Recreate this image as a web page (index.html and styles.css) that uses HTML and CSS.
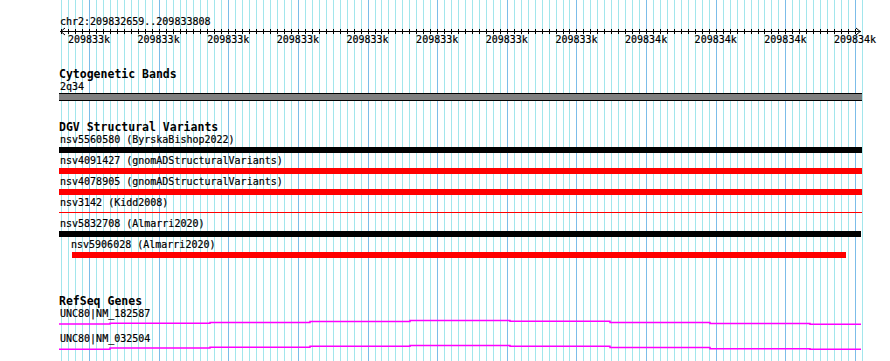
FILE: index.html
```html
<!DOCTYPE html>
<html lang="en">
<head>
<meta charset="utf-8">
<title>Genome browser</title>
<link rel="stylesheet" href="styles.css">
</head>
<body>
<div class="view">
  <svg class="grid" width="890" height="361" viewBox="0 0 890 361" aria-hidden="true">
    <path class="grid-minor" d="M61.5 0V361M68.5 0V361M75.5 0V361M82.5 0V361M96.5 0V361M103.5 0V361M110.5 0V361M117.5 0V361M124.5 0V361M131.5 0V361M138.5 0V361M145.5 0V361M152.5 0V361M166.5 0V361M173.5 0V361M180.5 0V361M186.5 0V361M193.5 0V361M200.5 0V361M207.5 0V361M214.5 0V361M221.5 0V361M235.5 0V361M242.5 0V361M249.5 0V361M256.5 0V361M263.5 0V361M270.5 0V361M277.5 0V361M284.5 0V361M291.5 0V361M305.5 0V361M312.5 0V361M319.5 0V361M326.5 0V361M333.5 0V361M340.5 0V361M347.5 0V361M354.5 0V361M361.5 0V361M375.5 0V361M381.5 0V361M388.5 0V361M395.5 0V361M402.5 0V361M409.5 0V361M416.5 0V361M423.5 0V361M430.5 0V361M444.5 0V361M451.5 0V361M458.5 0V361M465.5 0V361M472.5 0V361M479.5 0V361M486.5 0V361M493.5 0V361M500.5 0V361M514.5 0V361M521.5 0V361M528.5 0V361M535.5 0V361M542.5 0V361M549.5 0V361M556.5 0V361M563.5 0V361M569.5 0V361M583.5 0V361M590.5 0V361M597.5 0V361M604.5 0V361M611.5 0V361M618.5 0V361M625.5 0V361M632.5 0V361M639.5 0V361M653.5 0V361M660.5 0V361M667.5 0V361M674.5 0V361M681.5 0V361M688.5 0V361M695.5 0V361M702.5 0V361M709.5 0V361M723.5 0V361M730.5 0V361M737.5 0V361M744.5 0V361M751.5 0V361M758.5 0V361M764.5 0V361M771.5 0V361M778.5 0V361M792.5 0V361M799.5 0V361M806.5 0V361M813.5 0V361M820.5 0V361M827.5 0V361M834.5 0V361M841.5 0V361M848.5 0V361M862.5 0V361"/>
    <path class="grid-major" d="M89.5 0V361M159.5 0V361M228.5 0V361M298.5 0V361M368.5 0V361M437.5 0V361M507.5 0V361M576.5 0V361M646.5 0V361M716.5 0V361M785.5 0V361M855.5 0V361"/>
  </svg>

  <div class="content">
    <div class="locus">chr2:209832659..209833808</div>

    <svg class="ruler" width="890" height="20" viewBox="0 0 890 20">
      <path class="ruler-line" d="M60 4.5H861M65 1L60.8 4.5L65 8M856 1L860.2 4.5L856 8"/>
      <path class="ruler-ticks" d="M61.5 2v5M68.5 2v5M75.5 2v5M82.5 2v5M89.5 2v5M96.5 2v5M103.5 2v5M110.5 2v5M117.5 2v5M124.5 2v5M131.5 2v5M138.5 2v5M145.5 2v5M152.5 2v5M159.5 2v5M166.5 2v5M173.5 2v5M180.5 2v5M186.5 2v5M193.5 2v5M200.5 2v5M207.5 2v5M214.5 2v5M221.5 2v5M228.5 2v5M235.5 2v5M242.5 2v5M249.5 2v5M256.5 2v5M263.5 2v5M270.5 2v5M277.5 2v5M284.5 2v5M291.5 2v5M298.5 2v5M305.5 2v5M312.5 2v5M319.5 2v5M326.5 2v5M333.5 2v5M340.5 2v5M347.5 2v5M354.5 2v5M361.5 2v5M368.5 2v5M375.5 2v5M381.5 2v5M388.5 2v5M395.5 2v5M402.5 2v5M409.5 2v5M416.5 2v5M423.5 2v5M430.5 2v5M437.5 2v5M444.5 2v5M451.5 2v5M458.5 2v5M465.5 2v5M472.5 2v5M479.5 2v5M486.5 2v5M493.5 2v5M500.5 2v5M507.5 2v5M514.5 2v5M521.5 2v5M528.5 2v5M535.5 2v5M542.5 2v5M549.5 2v5M556.5 2v5M563.5 2v5M569.5 2v5M576.5 2v5M583.5 2v5M590.5 2v5M597.5 2v5M604.5 2v5M611.5 2v5M618.5 2v5M625.5 2v5M632.5 2v5M639.5 2v5M646.5 2v5M653.5 2v5M660.5 2v5M667.5 2v5M674.5 2v5M681.5 2v5M688.5 2v5M695.5 2v5M702.5 2v5M709.5 2v5M716.5 2v5M723.5 2v5M730.5 2v5M737.5 2v5M744.5 2v5M751.5 2v5M758.5 2v5M764.5 2v5M771.5 2v5M778.5 2v5M785.5 2v5M792.5 2v5M799.5 2v5M806.5 2v5M813.5 2v5M820.5 2v5M827.5 2v5M834.5 2v5M841.5 2v5M848.5 2v5M855.5 2v5"/>
      <g class="ruler-labels">
        <text x="89" y="16">209833k</text>
        <text x="158.6" y="16">209833k</text>
        <text x="228.3" y="16">209833k</text>
        <text x="297.9" y="16">209833k</text>
        <text x="367.5" y="16">209833k</text>
        <text x="437.2" y="16">209833k</text>
        <text x="506.8" y="16">209833k</text>
        <text x="576.5" y="16">209833k</text>
        <text x="646.1" y="16">209834k</text>
        <text x="715.7" y="16">209834k</text>
        <text x="785.4" y="16">209834k</text>
        <text x="855" y="16">209834k</text>
      </g>
    </svg>

    <section class="track track-bands">
      <h2 class="track-title">Cytogenetic Bands</h2>
      <div class="label">2q34</div>
      <div class="band"></div>
    </section>

    <section class="track track-dgv">
      <h2 class="track-title">DGV Structural Variants</h2>
      <div class="variant">
        <div class="label">nsv5560580 (ByrskaBishop2022)</div>
        <div class="bar bar-black"></div>
      </div>
      <div class="variant">
        <div class="label">nsv4091427 (gnomADStructuralVariants)</div>
        <div class="bar bar-red"></div>
      </div>
      <div class="variant">
        <div class="label">nsv4078905 (gnomADStructuralVariants)</div>
        <div class="bar bar-red"></div>
      </div>
      <div class="variant">
        <div class="label">nsv3142 (Kidd2008)</div>
        <div class="bar bar-thin"></div>
      </div>
      <div class="variant">
        <div class="label">nsv5832708 (Almarri2020)</div>
        <div class="bar bar-black bar-short"></div>
      </div>
      <div class="variant variant-nested">
        <div class="label">nsv5906028 (Almarri2020)</div>
        <div class="bar bar-red"></div>
      </div>
    </section>

    <section class="track track-genes">
      <h2 class="track-title">RefSeq Genes</h2>
      <div class="gene">
        <div class="label">UNC80|NM_182587</div>
        <svg class="gene-line" width="890" height="14" viewBox="0 0 890 14">
          <path d="M59 5H110V4.3H210V3.4H310V2.4H410V1.5H510V2.3H610V3.5H710V4.5H810V5.3H861"/>
        </svg>
      </div>
      <div class="gene">
        <div class="label">UNC80|NM_032504</div>
        <svg class="gene-line" width="890" height="14" viewBox="0 0 890 14">
          <path d="M59 5.2H110V4.1H210V3.3H310V2.3H410V1.5H510V2.3H610V3.6H710V4.8H810V5.3H861"/>
        </svg>
      </div>
    </section>
  </div>
</div>
</body>
</html>
```

FILE: styles.css
```css
html, body {
  margin: 0;
  padding: 0;
  background: #ffffff;
}

.view {
  position: relative;
  width: 890px;
  height: 361px;
  overflow: hidden;
  font-family: "DejaVu Sans Mono", "Liberation Mono", monospace;
  color: #000;
}

.grid {
  position: absolute;
  top: 0;
  left: 0;
  z-index: 0;
}

.grid-minor {
  stroke: #a2e6ec;
  stroke-width: 1;
  fill: none;
}

.grid-major {
  stroke: #7cbde9;
  stroke-width: 1;
  fill: none;
}

.content {
  position: relative;
  z-index: 1;
  padding-top: 16px;
}

.locus {
  margin-left: 60px;
  font-size: 10px;
  line-height: 11px;
  -webkit-text-stroke: 0.2px #000;
}

.ruler {
  display: block;
}

.ruler-line,
.ruler-ticks {
  stroke: #000;
  stroke-width: 1;
  fill: none;
}

.ruler-labels text {
  font-family: "DejaVu Sans Mono", "Liberation Mono", monospace;
  font-size: 10px;
  text-anchor: middle;
  fill: #000;
  stroke: #000;
  stroke-width: 0.2px;
}

.track-title {
  margin: 0 0 0 59px;
  font-size: 11.5px;
  line-height: 13px;
  font-weight: bold;
}

.label {
  margin-left: 60px;
  font-size: 10px;
  line-height: 11px;
  white-space: nowrap;
  -webkit-text-stroke: 0.2px #000;
}

.track-bands {
  margin-top: 21px;
}

.band {
  margin: 1px 0 0 59px;
  width: 803px;
  height: 6px;
  background: #808080;
  border-top: 1px solid #000;
  border-bottom: 1px solid #000;
}

.track-dgv {
  margin-top: 20px;
}

.variant {
  padding-bottom: 2px;
}

.bar {
  margin: 2px 0 0 59px;
  width: 803px;
  height: 6px;
}

.bar-black {
  background: #000;
}

.bar-red {
  background: #ff0000;
}

.bar-thin {
  background: linear-gradient(to bottom, transparent 2px, #ff0000 2px, #ff0000 3px, transparent 3px);
}

.bar-short {
  width: 802px;
}

.variant-nested .label {
  margin-left: 71px;
}

.variant-nested .bar {
  margin-left: 72px;
  width: 774px;
}

.track-genes {
  margin-top: 35px;
}

.gene-line {
  display: block;
}

.gene-line path {
  stroke: #ff00ff;
  stroke-width: 1.5;
  fill: none;
}
```
